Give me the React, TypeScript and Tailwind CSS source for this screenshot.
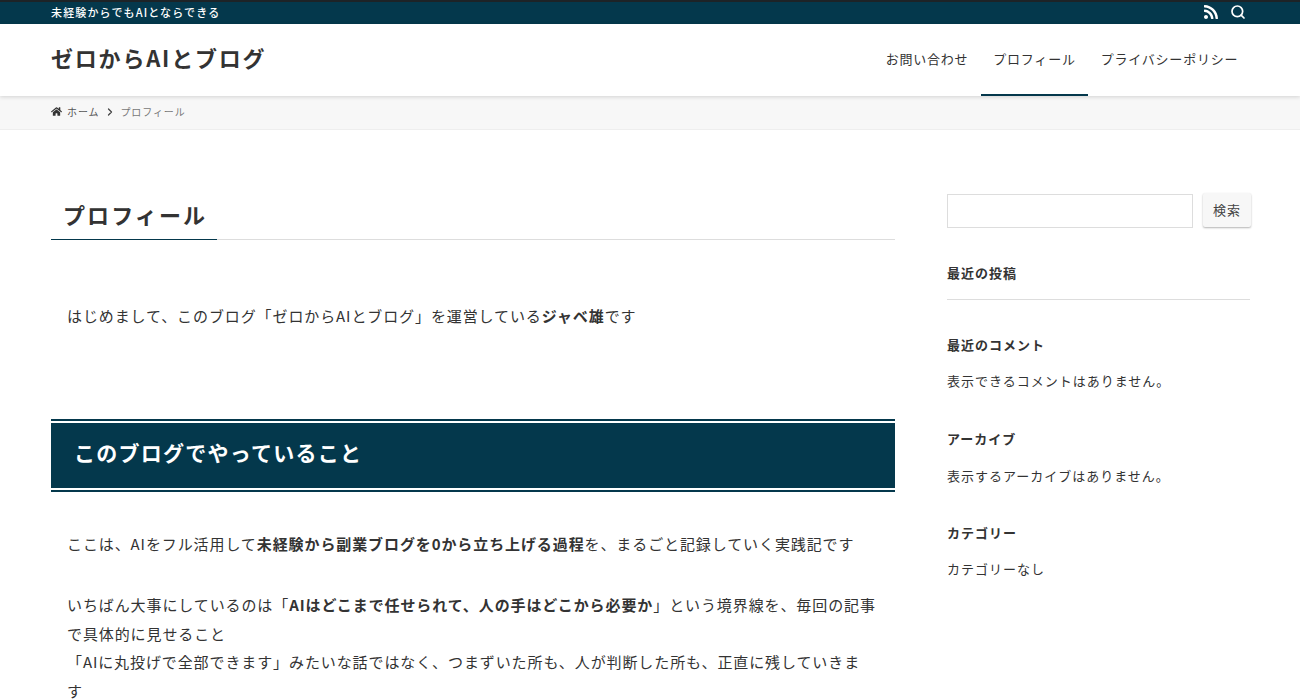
import { FaHome, FaRss } from "react-icons/fa";
import { ChevronRight, Search } from "lucide-react";

export default function App() {
  return (
    <div className="h-[700px] overflow-hidden bg-white text-[#333] font-['Noto_Sans_CJK_JP','Noto_Sans',sans-serif] text-[15px] tracking-[0.9px]">
      <div className="h-[24px] bg-[#04384c] border-t-2 border-[#1d2327] flex items-center justify-between pl-[51px] pr-[54px] text-white">
        <span className="text-[11px] font-medium leading-none tracking-[1.15px] pb-[2px]">未経験からでもAIとならできる</span>
        <div className="flex items-center gap-[11px] pb-[2px]">
          <FaRss size={16} />
          <Search size={16} strokeWidth={2.6} />
        </div>
      </div>
      <header className="relative z-10 h-[72px] bg-white shadow-[0_1px_4px_rgba(0,0,0,0.15)] flex items-center justify-between pl-[51px] pr-[49px]">
        <div className="text-[22px] font-bold leading-none tracking-[1.8px] pb-[6px]">ゼロからAIとブログ</div>
        <nav className="flex h-full text-[13px] tracking-[0.78px]">
          <a className="h-full w-[108px] flex items-center justify-center pb-[2px]">お問い合わせ</a>
          <a className="h-full w-[107px] flex items-center justify-center border-b-2 border-[#04384c]">プロフィール</a>
          <a className="h-full w-[163px] flex items-center justify-center pb-[2px]">プライバシーポリシー</a>
        </nav>
      </header>
      <div className="h-[34px] bg-[#f7f7f7] border-b border-[#eee] flex items-center pl-[51px] pb-[2px] text-[10px] tracking-[0.9px] text-[#555]">
        <FaHome size={11} className="text-[#333] mr-[5px]" />
        <span>ホーム</span>
        <ChevronRight size={12} strokeWidth={2.5} className="ml-[5px] mr-[4px] text-[#444]" />
        <span className="text-[#777]">プロフィール</span>
      </div>
      <div className="flex pl-[51px] pt-[64px]">
        <main className="w-[844px] shrink-0">
          <div className="border-b border-[#ddd] h-[46px]">
            <h1 className="flex items-center h-[46px] pl-[12px] pb-[6px] border-b border-[#04384c] text-[22px] font-bold leading-none w-[166px] tracking-[2.1px]">プロフィール</h1>
          </div>
          <div className="pl-[16px] pr-[16px] pt-[62px] leading-[28.5px]">
            <p>はじめまして、このブログ「ゼロからAIとブログ」を運営している<b>ジャベ雄</b>です</p>
          </div>
          <h2 className="mt-[88px] h-[73px] border-y-2 border-[#04384c] py-[2px]">
            <span className="flex items-center h-full bg-[#04384c] text-white text-[21px] font-bold pl-[23px] pb-[6px] leading-none tracking-[1.25px]">このブログでやっていること</span>
          </h2>
          <div className="pl-[16px] pr-[16px] pt-[38px] leading-[28.5px]">
            <p>ここは、AIをフル活用して<b>未経験から副業ブログを0から立ち上げる過程</b>を、まるごと記録していく実践記です</p>
            <p className="mt-[33px]">いちばん大事にしているのは「<b>AIはどこまで任せられて、人の手はどこから必要か</b>」という境界線を、毎回の記事で具体的に見せること<br />「AIに丸投げで全部できます」みたいな話ではなく、つまずいた所も、人が判断した所も、正直に残していきま<br />す</p>
          </div>
        </main>
        <aside className="ml-[52px] w-[304px] shrink-0 text-[13px] tracking-[1px]">
          <div className="flex justify-between items-start">
            <div className="w-[246px] h-[34px] border border-[#ddd]" />
            <button className="w-[48px] h-[34px] -mt-px bg-[#f7f7f7] rounded-[2px] shadow-[0_1px_2px_rgba(0,0,0,0.3)] text-[13px] text-[#444] tracking-[0.9px]">検索</button>
          </div>
          <h3 className="mt-[34px] font-bold leading-[22px]">最近の投稿</h3>
          <div className="mt-[15px] border-b border-[#ddd] w-[303px]" />
          <h3 className="mt-[34px] font-bold leading-[22px]">最近のコメント</h3>
          <p className="mt-[14px] leading-[22px]">表示できるコメントはありません。</p>
          <h3 className="mt-[36px] font-bold leading-[22px]">アーカイブ</h3>
          <p className="mt-[15px] leading-[22px]">表示するアーカイブはありません。</p>
          <h3 className="mt-[35px] font-bold leading-[22px]">カテゴリー</h3>
          <p className="mt-[14px] leading-[22px]">カテゴリーなし</p>
        </aside>
      </div>
    </div>
  );
}
